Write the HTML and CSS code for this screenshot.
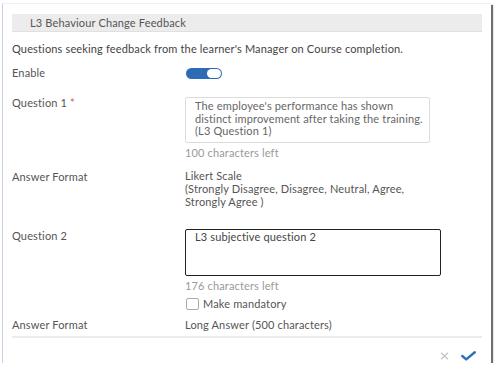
FILE: index.html
```html
<!DOCTYPE html>
<html>
<head>
<meta charset="utf-8">
<link rel="stylesheet" href="styles.css">
</head>
<body>
<div class="card">
  <div class="card-header">L3 Behaviour Change Feedback</div>
  <p class="desc">Questions seeking feedback from the learner's Manager on Course completion.</p>

  <div class="row row-enable">
    <div class="label">Enable</div>
    <div class="value"><span class="toggle"><span class="knob"></span></span></div>
  </div>

  <div class="row row-q1">
    <div class="label">Question 1 <span class="req">*</span></div>
    <div class="value">
      <div class="textbox">The employee's performance has shown distinct improvement after taking the training. (L3 Question 1)</div>
      <div class="hint">100 characters left</div>
    </div>
  </div>

  <div class="row row-af1">
    <div class="label">Answer Format</div>
    <div class="value">Likert Scale<br>(Strongly Disagree, Disagree, Neutral, Agree,<br>Strongly Agree )</div>
  </div>

  <div class="row row-q2">
    <div class="label">Question 2</div>
    <div class="value">
      <div class="textbox active">L3 subjective question 2</div>
      <div class="hint">176 characters left</div>
      <label class="check"><span class="box"></span>Make mandatory</label>
    </div>
  </div>

  <div class="row row-af2">
    <div class="label">Answer Format</div>
    <div class="value">Long Answer (500 characters)</div>
  </div>

  <div class="footer">
    <svg class="icon-x" width="9" height="8" viewBox="0 0 9 8"><path d="M1 0.8L8 7.2M8 0.8L1 7.2" stroke="#c8c8c8" stroke-width="1.5" fill="none"/></svg>
    <svg class="icon-check" width="15" height="10" viewBox="0 0 15 10"><path d="M1.3 5L5.2 8.4L13.8 1.3" stroke="#2c6fbd" stroke-width="2.4" fill="none" stroke-linecap="round" stroke-linejoin="round"/></svg>
  </div>
</div>
</body>
</html>
```
FILE: styles.css
```css
html, body {
  margin: 0;
  padding: 0;
  background: #ffffff;
}
body {
  font-family: Lato, "Open Sans", sans-serif;
  font-size: 11px;
  letter-spacing: 0.15px;
  color: #555;
  padding: 3px 0 0 2px;
}
.card {
  width: 470px;
  height: 349px;
  padding: 10px 9px 0 9px;
  background: #fff;
  border-left: 1px solid #c9d1e6;
  border-top: 1px solid #f0f0f0;
  box-shadow: 2px 2px 1px #707070;
  box-sizing: content-box;
}
.card-header {
  background: #ececec;
  height: 17px;
  line-height: 17px;
  padding-left: 18px;
  color: #555;
  border-bottom: 1px solid #e0e0e0;
}
.desc {
  margin: 10px 0 0 0;
  line-height: 13px;
  color: #444;
}
.row {
  display: grid;
  grid-template-columns: 173px 256px;
  line-height: 13px;
}
.label, .value {
  color: #555;
}
.row-enable {
  margin-top: 11px;
  align-items: center;
}
.toggle {
  display: block;
  width: 36px;
  height: 11px;
  border-radius: 6px;
  background: #2d6cb4;
  position: relative;
  margin-left: 1px;
  margin-top: 1px;
}
.knob {
  position: absolute;
  right: 1px;
  top: 1px;
  width: 14px;
  height: 9px;
  border-radius: 5px;
  background: #fff;
}
.row-q1 {
  margin-top: 17px;
}
.req {
  color: #d9534f;
}
.textbox {
  margin-top: 1px;
  height: 42px;
  border: 1px solid #dcdcdc;
  border-radius: 2px;
  padding: 2px 0 0 9px;
  width: 234px;
  line-height: 12.5px;
  color: #666;
}
.textbox.active {
  margin-top: 0;
  border: 1px solid #222;
  height: 44px;
  padding-top: 1px;
  width: 245px;
  color: #444;
}
.hint {
  color: #999;
  margin-top: 3px;
}
.row-af1 {
  margin-top: 11px;
}
.row-af1 .value {
  line-height: 12.8px;
}
.row-q2 {
  margin-top: 21px;
}
.check {
  display: flex;
  align-items: center;
  margin-top: 5px;
  color: #555;
}
.box {
  width: 13px;
  height: 12px;
  border: 1px solid #aaa;
  border-radius: 2px;
  margin: 0 4px 0 1px;
  box-sizing: border-box;
  background: #fff;
}
.row-af2 {
  margin-top: 8px;
}
.footer {
  margin-top: 5px;
  border-top: 2px solid #ececec;
  display: flex;
  justify-content: flex-end;
  align-items: center;
  gap: 12px;
  padding: 13px 6px 0 0;
}
```
